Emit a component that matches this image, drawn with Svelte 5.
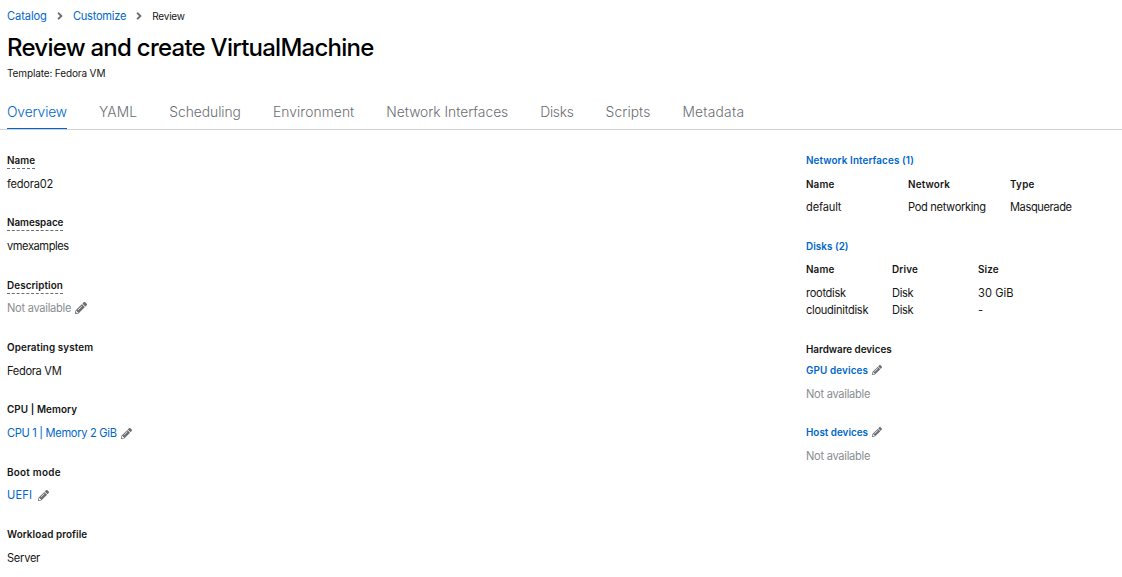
<script>
  const crumbs = [
    { text: 'Catalog', width: 39.8 },
    { text: 'Customize', width: 53.1 }
  ];
  const tabs = [
    ['Overview', 60], ['YAML', 38.3], ['Scheduling', 71.6], ['Environment', 81.4],
    ['Network Interfaces', 121.9], ['Disks', 33.4], ['Scripts', 44.8], ['Metadata', 61.8]
  ];
  const details = [
    { label: 'Name', lw: 28.2, value: 'fedora02', vw: 46, help: true },
    { label: 'Namespace', lw: 56.4, value: 'vmexamples', vw: 61.8, help: true },
    { label: 'Description', lw: 56, value: 'Not available', vw: 64.2, help: true, muted: true, icon: 12, gap: 3.6 },
    { label: 'Operating system', lw: 86.2, value: 'Fedora VM', vw: 54.4 },
    { label: 'CPU | Memory', lw: 70.1, value: 'CPU 1 | Memory 2 GiB', vw: 109.6, link: true, icon: 11, gap: 4.7 },
    { label: 'Boot mode', lw: 53.8, value: 'UEFI', vw: 25, link: true, icon: 11, gap: 6.1 },
    { label: 'Workload profile', lw: 80.2, value: 'Server', vw: 33 }
  ];
  const nicHead = [['Name', 28.4], ['Network', 42], ['Type', 24.6]];
  const nicRow = [['default', 35.3], ['Pod networking', 77.8], ['Masquerade', 61.6]];
  const diskHead = [['Name', 28.4], ['Drive', 26], ['Size', 20.6]];
  const diskRows = [
    [['rootdisk', 39.8], ['Disk', 21.3], ['30 GiB', 35.6]],
    [['cloudinitdisk', 62.2], ['Disk', 21.3], ['-', 5]]
  ];
  const devices = [['GPU devices', 62], ['Host devices', 62]];

  // Tracks a run of text so that it takes up the given width.
  function fit(node, width) {
    const natural = node.getBoundingClientRect().width;
    node.style.letterSpacing = `${(width - natural) / node.textContent.length}px`;
  }
</script>

{#snippet run(text, width)}<span class="run" use:fit={width}>{text}</span>{/snippet}

{#snippet pencil(size)}
  <svg class="pencil" width={size} height={size} viewBox="0 0 512 512" aria-hidden="true">
    <path d="M497.9 142.1l-46.1 46.1c-4.7 4.7-12.3 4.7-17 0l-111-111c-4.7-4.7-4.7-12.3 0-17l46.1-46.1c18.7-18.7 49.1-18.7 67.9 0l60.1 60.1c18.8 18.7 18.8 49.1 0 67.9zM284.2 99.8L21.6 362.4.4 483.9c-2.9 16.4 11.4 30.6 27.8 27.8l121.5-21.3 262.6-262.6c4.7-4.7 4.7-12.3 0-17l-111-111c-4.8-4.7-12.4-4.7-17.1 0zM124.1 339.9c-5.5-5.5-5.5-14.3 0-19.8l154-154c5.5-5.5 14.3-5.5 19.8 0s5.5 14.3 0 19.8l-154 154c-5.5 5.5-14.3 5.5-19.8 0zM88 424h48v36.3l-64.5 11.3-31.1-31.1L51.7 376H88v48z" />
  </svg>
{/snippet}

<div class="page">
  <header>
    <nav class="crumbs">
      {#each crumbs as c}
        <a class="link">{@render run(c.text, c.width)}</a>
        <svg class="angle" width="6" height="12" viewBox="0 0 256 512" aria-hidden="true">
          <path d="M224.3 273l-136 136c-9.4 9.4-24.6 9.4-33.9 0l-22.6-22.6c-9.4-9.4-9.4-24.6 0-33.9l96.4-96.4-96.4-96.4c-9.4-9.4-9.4-24.6 0-33.9L54.3 103c9.4-9.4 24.6-9.4 33.9 0l136 136c9.5 9.4 9.5 24.6.1 34z" />
        </svg>
      {/each}
      <span class="current">{@render run('Review', 32.4)}</span>
    </nav>
    <h1>{@render run('Review and create VirtualMachine', 366.6)}</h1>
    <div class="template">{@render run('Template: Fedora VM', 98.3)}</div>
  </header>

  <div class="tabs">
    {#each tabs as [text, width], i}
      <div class="tab" class:active={i === 0}>{@render run(text, width)}</div>
    {/each}
  </div>

  <main>
    <section class="details">
      {#each details as d}
        <div class="item">
          <div class="label"><span class:help={d.help}>{@render run(d.label, d.lw)}</span></div>
          <div class="value" class:link={d.link} class:muted={d.muted} style:gap="{d.gap ?? 0}px">
            {@render run(d.value, d.vw)}
            {#if d.icon}{@render pencil(d.icon)}{/if}
          </div>
        </div>
      {/each}
    </section>

    <section class="side">
      <div class="label link">{@render run('Network Interfaces (1)', 107.8)}</div>
      <div class="table nics">
        {#each nicHead as [t, w]}<div class="label">{@render run(t, w)}</div>{/each}
        {#each nicRow as [t, w]}<div class="cell">{@render run(t, w)}</div>{/each}
      </div>

      <div class="label link">{@render run('Disks (2)', 42.6)}</div>
      <div class="table disks">
        {#each diskHead as [t, w]}<div class="label">{@render run(t, w)}</div>{/each}
        {#each diskRows as row}
          {#each row as [t, w]}<div class="cell">{@render run(t, w)}</div>{/each}
        {/each}
      </div>

      <div class="label hardware">{@render run('Hardware devices', 85.6)}</div>
      {#each devices as [t, w]}
        <div class="device">
          <div class="label link">{@render run(t, w)}{@render pencil(10)}</div>
          <div class="value muted">{@render run('Not available', 64.2)}</div>
        </div>
      {/each}
    </section>
  </main>
</div>

<style>
  :global(body) {
    background: #fff;
  }
  .page {
    width: 1122px;
    height: 577px;
    overflow: hidden;
    font-family: Inter, 'Liberation Sans', sans-serif;
    font-size: 11.1px;
    line-height: 16px;
    color: #151515;
    white-space: nowrap;
  }
  .run {
    display: inline-block;
    white-space: pre;
  }
  header {
    padding: 8px 7px 0;
  }
  .crumbs {
    display: flex;
    align-items: center;
    height: 16px;
  }
  .angle {
    margin: 0 10.5px 0 9.7px;
    fill: #6a6e73;
  }
  .current,
  .template {
    font-size: 10px;
  }
  h1 {
    margin: 8px 0 0;
    font-size: 24px;
    font-weight: 450;
    line-height: 32px;
    color: #000;
  }
  .template {
    margin-top: 1px;
  }
  .link {
    color: #06c;
  }
  .muted {
    color: #8a8d90;
  }
  .tabs {
    display: flex;
    gap: 32px;
    height: 33px;
    margin-top: 15px;
    padding-left: 7px;
    border-bottom: 1px solid #d2d2d2;
  }
  .tab {
    height: 32px;
    font-size: 13.8px;
    line-height: 33px;
    font-weight: 350;
    color: #6a6e73;
    border-bottom: 1px solid transparent;
  }
  .tab.active {
    color: #06c;
    border-bottom-color: #06c;
  }
  main {
    display: grid;
    grid-template-columns: 799px 1fr;
    padding: 21px 0 0 7px;
  }
  .item {
    height: 62.35px;
  }
  .label {
    height: 18px;
    font-size: 9.9px;
    font-weight: 600;
    line-height: 18px;
  }
  .help {
    display: inline-block;
    height: 17px;
    border-bottom: 1px dashed #6a6e73;
  }
  .value {
    display: flex;
    align-items: center;
    height: 16px;
    margin-top: 6.7px;
  }
  .pencil {
    flex: none;
    fill: #6a6e73;
  }
  .nics,
  .disks {
    display: grid;
  }
  .nics {
    grid-template-columns: 102px 102px 1fr;
    grid-template-rows: 24px 16px;
    padding: 6px 0 22px;
  }
  .disks {
    grid-template-columns: 86px 86px 1fr;
    grid-template-rows: 25px 17px 17px;
    padding: 5px 0 21px;
  }
  .device {
    height: 62.2px;
  }
  .device .label {
    display: flex;
    align-items: center;
    gap: 4px;
  }
  .hardware {
    margin-bottom: 3px;
  }
</style>
